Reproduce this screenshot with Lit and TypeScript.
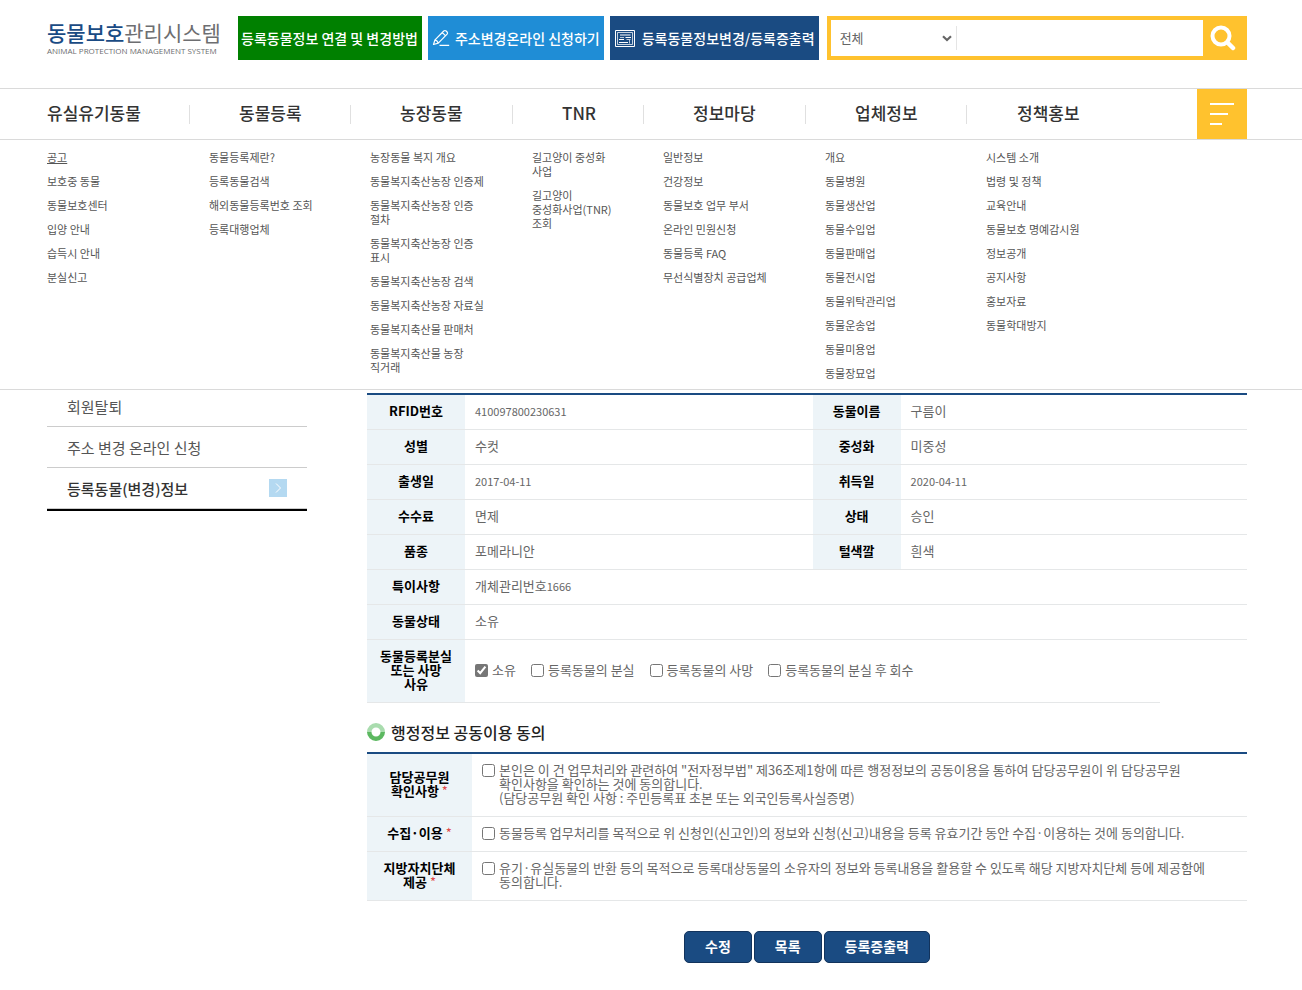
import { LitElement, html, css, nothing } from "lit";
import { customElement } from "lit/decorators.js";

interface MenuGroup {
  title: string;
  items: string[];
}

const MENU: MenuGroup[] = [
  { title: "유실유기동물", items: ["공고", "보호중 동물", "동물보호센터", "입양 안내", "습득시 안내", "분실신고"] },
  { title: "동물등록", items: ["동물등록제란?", "등록동물검색", "해외동물등록번호 조회", "등록대행업체"] },
  {
    title: "농장동물",
    items: [
      "농장동물 복지 개요",
      "동물복지축산농장 인증제",
      "동물복지축산농장 인증 절차",
      "동물복지축산농장 인증 표시",
      "동물복지축산농장 검색",
      "동물복지축산농장 자료실",
      "동물복지축산물 판매처",
      "동물복지축산물 농장 직거래",
    ],
  },
  { title: "TNR", items: ["길고양이 중성화 사업", "길고양이 중성화사업(TNR) 조회"] },
  {
    title: "정보마당",
    items: ["일반정보", "건강정보", "동물보호 업무 부서", "온라인 민원신청", "동물등록 FAQ", "무선식별장치 공급업체"],
  },
  {
    title: "업체정보",
    items: [
      "개요", "동물병원", "동물생산업", "동물수입업", "동물판매업",
      "동물전시업", "동물위탁관리업", "동물운송업", "동물미용업", "동물장묘업",
    ],
  },
  {
    title: "정책홍보",
    items: ["시스템 소개", "법령 및 정책", "교육안내", "동물보호 명예감시원", "정보공개", "공지사항", "홍보자료", "동물학대방지"],
  },
];

const PAIRS = [
  ["RFID번호", "410097800230631", "동물이름", "구름이"],
  ["성별", "수컷", "중성화", "미중성"],
  ["출생일", "2017-04-11", "취득일", "2020-04-11"],
  ["수수료", "면제", "상태", "승인"],
  ["품종", "포메라니안", "털색깔", "흰색"],
];

const REASONS = ["소유", "등록동물의 분실", "등록동물의 사망", "등록동물의 분실 후 회수"];

const value = (text: string) =>
  /^[\d-]+$/.test(text) ? html`<span class="num">${text}</span>` : text;

@customElement("site-header")
class SiteHeader extends LitElement {
  static styles = css`
    :host { display: block; }
    a { color: inherit; text-decoration: none; }
    .bar {
      display: flex;
      align-items: flex-start;
      padding: 16px 55px 28px 47px;
    }
    .logo { width: 191px; flex: none; color: #6d6e71; }
    .name { display: block; padding-top: 2px; font-size: 21px; line-height: 28px; white-space: nowrap; }
    .name b { color: #1a4b84; font-weight: 500; }
    .sub { display: block; font: 8px/10px "Open Sans", sans-serif; white-space: nowrap; }
    .quick { display: flex; gap: 6px; flex: none; }
    .quick a {
      display: flex;
      align-items: center;
      height: 44px;
      padding: 0 4px 0 3px;
      color: #fff;
      font-size: 14px;
      font-weight: 500;
      white-space: nowrap;
    }
    .green { background: #008000; }
    .quick .blue { background: #1f8dd6; gap: 5px; padding-left: 4px; }
    .quick .navy { background: #1a4b82; gap: 7px; padding-left: 5px; }
    .search {
      display: flex;
      flex: 1;
      min-width: 0;
      height: 36px;
      margin-left: 8px;
      border: 4px solid #ffc22e;
      border-right: 0;
      background: #fff;
    }
    .pick { display: grid; width: 126px; flex: none; align-items: center; }
    .pick > * { grid-area: 1 / 1; }
    .pick select {
      appearance: none;
      width: 100%;
      height: 24px;
      padding: 0 24px 0 9px;
      border: 0;
      border-right: 1px solid #e5e5e5;
      border-radius: 0;
      background: none;
      color: #666;
      font: inherit;
      font-size: 13px;
      line-height: 22px;
    }
    .pick svg { justify-self: end; margin-right: 5px; pointer-events: none; }
    .search input { flex: 1; min-width: 0; border: 0; padding: 0 8px; outline: none; font: inherit; font-size: 13px; }
    .search button {
      display: grid;
      place-items: center;
      width: 44px;
      flex: none;
      padding: 0 4px 0 0;
      border: 0;
      background: #ffc22e;
    }
  `;

  render() {
    return html`
      <header class="bar">
        <a class="logo" href="#">
          <span class="name"><b>동물보호</b>관리시스템</span>
          <span class="sub">ANIMAL PROTECTION MANAGEMENT SYSTEM</span>
        </a>
        <div class="quick">
          <a class="green" href="#">등록동물정보 연결 및 변경방법</a>
          <a class="blue" href="#">
            <svg width="18" height="18" viewBox="0 0 18 18" fill="none" stroke="#fff" stroke-width="1.2" stroke-linejoin="round">
              <path d="M1.500 15.500 3 10.800 11.800 2q1.200-1 2.300 0l1 1q1 1 0 2.200L6.300 14.100zM3 10.800q2.400.600 3.300 3.300M10.400 3.600l3.200 3.200M7.500 16.400h9.700" />
            </svg>
            주소변경온라인 신청하기
          </a>
          <a class="navy" href="#">
            <svg width="20" height="17" viewBox="0 0 20 17" fill="none" stroke="#fff">
              <path d="M.5.5h19v16H.5z" />
              <path d="M2.500 2.500h15v12h-15z" opacity=".75" />
              <path d="M5 5h10.500M4 9.500h5M10.500 7.500h5.500M4 12.500h9" />
              <path d="M5 7.500h4M11.500 9.500h4M14.500 10v3.500" opacity=".7" />
            </svg>
            등록동물정보변경/등록증출력
          </a>
        </div>
        <form class="search" @submit=${(e: Event) => e.preventDefault()}>
          <div class="pick">
            <select aria-label="검색 구분"><option>전체</option></select>
            <svg width="10" height="7" viewBox="0 0 10 7" fill="none" stroke="#666" stroke-width="2.2">
              <path d="m1 1.200 4 3.800 4-3.800" />
            </svg>
          </div>
          <input type="text" aria-label="검색어" />
          <button aria-label="검색">
            <svg width="26" height="26" viewBox="0 0 26 26" fill="none" stroke="#fff">
              <circle cx="11" cy="11" r="8.500" stroke-width="4" />
              <path d="m17.500 17.500 5.500 5.500" stroke-width="4.500" stroke-linecap="round" />
            </svg>
          </button>
        </form>
      </header>
    `;
  }
}

@customElement("site-menu")
class SiteMenu extends LitElement {
  static styles = css`
    :host { display: block; position: relative; z-index: 1; background: #fff; }
    a { color: inherit; text-decoration: none; }
    .row {
      display: grid;
      grid-template-columns: 143fr 161fr 162fr 131fr 162fr 161fr 280fr;
      padding: 0 55px 0 47px;
    }
    .titles { border-top: 1px solid #dadada; border-bottom: 1px solid #dadada; align-items: center; }
    .title {
      height: 19px;
      padding-left: 49px;
      border-right: 1px solid #e0e0e0;
      color: #333;
      font-size: 17px;
      font-weight: 500;
      line-height: 16px;
      white-space: nowrap;
    }
    .title:first-child { padding-left: 0; }
    .last { display: flex; align-items: center; justify-content: space-between; padding-left: 50px; }
    .last a { height: 19px; color: #333; font-size: 17px; font-weight: 500; line-height: 16px; }
    .all {
      display: grid;
      align-content: center;
      gap: 8px;
      width: 50px;
      height: 50px;
      padding: 0 13px;
      border: 0;
      background: #ffc22e;
    }
    .all i { height: 2px; background: #fff; }
    .all i:nth-child(2) { width: 18px; }
    .all i:nth-child(3) { width: 12px; }
    .panel { padding-top: 10px; padding-bottom: 9px; border-bottom: 1px solid #dadada; }
    ul {
      display: grid;
      align-content: start;
      gap: 10px;
      margin: 0;
      padding: 0 20px 0 19px;
      list-style: none;
      color: #555;
      font-size: 11px;
      line-height: 14px;
      word-break: keep-all;
    }
    ul:first-child { padding-left: 0; }
    ul:first-child li:first-child a { text-decoration: underline; }
  `;

  render() {
    const last = MENU.length - 1;
    return html`
      <nav>
        <div class="row titles">
          ${MENU.slice(0, last).map((g) => html`<a class="title" href="#">${g.title}</a>`)}
          <div class="last">
            <a href="#">${MENU[last].title}</a>
            <button class="all" aria-label="전체메뉴"><i></i><i></i><i></i></button>
          </div>
        </div>
        <div class="row panel">
          ${MENU.map((g) => html`<ul>${g.items.map((t) => html`<li><a href="#">${t}</a></li>`)}</ul>`)}
        </div>
      </nav>
    `;
  }
}

@customElement("side-menu")
class SideMenu extends LitElement {
  static styles = css`
    :host { display: block; }
    ul { margin: 0; padding: 0; list-style: none; border-bottom: 2px solid #000; }
    a {
      display: flex;
      align-items: center;
      justify-content: space-between;
      height: 40px;
      padding: 0 20px;
      border-bottom: 1px solid #ccc;
      color: #555;
      font-size: 15px;
      text-decoration: none;
    }
    a.on { color: #333; font-weight: 500; }
  `;

  render() {
    return html`
      <ul>
        <li><a href="#">회원탈퇴</a></li>
        <li><a href="#">주소 변경 온라인 신청</a></li>
        <li>
          <a class="on" href="#">
            등록동물(변경)정보
            <svg width="18" height="18" viewBox="0 0 18 18" fill="none">
              <path d="M0 0h18v18H0z" fill="#b4d9f1" />
              <path d="m7 4.500 4.500 4.500L7 13.500" stroke="#fff" />
            </svg>
          </a>
        </li>
      </ul>
    `;
  }
}

@customElement("animal-detail")
class AnimalDetail extends LitElement {
  static styles = css`
    :host { display: block; min-width: 0; }
    table {
      width: 100%;
      table-layout: fixed;
      border-collapse: separate;
      border-spacing: 0;
      border-top: 2px solid #1a4b82;
      font-size: 13px;
      line-height: 14px;
      word-break: keep-all;
    }
    th, td { padding: 9px 10px 11px; border-bottom: 1px solid #e5e7e8; }
    th { background: #edf4f8; color: #000; font-weight: 700; }
    td { color: #666; text-align: left; }
    .c1 { width: 98px; }
    .c2 { width: 39.5%; }
    .c3 { width: 88px; }
    .c5 { width: 87px; }
    .a1 { width: 105px; }
    .num { font-size: 11px; }
    .choices { display: flex; flex-wrap: wrap; gap: 15px; }
    label { display: flex; gap: 4px; }
    input { flex: none; width: 13px; height: 13px; margin: 1px 0 0; accent-color: #767676; }
    .red { color: #e04848; font-weight: 400; }
    h2 {
      display: flex;
      align-items: center;
      gap: 6px;
      margin: 0;
      padding: 19px 0 10px;
      color: #222;
      font-size: 16px;
      font-weight: 500;
      line-height: 20px;
    }
    .buttons { display: flex; justify-content: center; gap: 2px; padding: 30px 0 27px; }
    button {
      height: 32px;
      padding: 0 20px 2px;
      border: 1px solid #12335c;
      border-radius: 5px;
      background: #1a4b82;
      color: #fff;
      font: inherit;
      font-size: 14px;
      font-weight: 700;
      line-height: 20px;
    }
  `;

  private consent(id: string, title: unknown, text: unknown) {
    return html`
      <tr>
        <th scope="row">${title} <span class="red">*</span></th>
        <td><label for=${id}><input type="checkbox" id=${id} /><span>${text}</span></label></td>
      </tr>
    `;
  }

  render() {
    return html`
      <table>
        <colgroup><col class="c1" /><col class="c2" /><col class="c3" /><col /><col class="c5" /></colgroup>
        <tbody>
          ${PAIRS.map(
            ([a, b, c, d]) => html`
              <tr>
                <th scope="row">${a}</th><td>${value(b)}</td>
                <th scope="row">${c}</th><td colspan="2">${value(d)}</td>
              </tr>
            `,
          )}
          <tr><th scope="row">특이사항</th><td colspan="4">개체관리번호<span class="num">1666</span></td></tr>
          <tr><th scope="row">동물상태</th><td colspan="4">소유</td></tr>
          <tr>
            <th scope="row">동물등록분실<br />또는 사망<br />사유</th>
            <td colspan="3">
              <div class="choices">
                ${REASONS.map(
                  (r, i) => html`
                    <label for="reason${i}">
                      <input type="checkbox" id="reason${i}" checked=${i === 0 ? "" : nothing} />
                      <span>${r}</span>
                    </label>
                  `,
                )}
              </div>
            </td>
          </tr>
        </tbody>
      </table>

      <h2>
        <svg width="18" height="18" viewBox="0 0 18 18" fill="none" stroke-width="4.500">
          <path d="M2.250 9a6.750 6.750 0 0 1 13.500 0" stroke="#a9dcae" />
          <path d="M2.250 9a6.750 6.750 0 0 0 13.500 0" stroke="#5cb860" />
        </svg>
        행정정보 공동이용 동의
      </h2>

      <table class="agree">
        <colgroup><col class="a1" /><col /></colgroup>
        <tbody>
          ${this.consent(
            "agree-official",
            html`담당공무원<br />확인사항`,
            html`본인은 이 건 업무처리와 관련하여 "전자정부법" 제36조제1항에 따른 행정정보의 공동이용을 통하여 담당공무원이 위 담당공무원<br />확인사항을 확인하는 것에 동의합니다.<br />(담당공무원 확인 사항 : 주민등록표 초본 또는 외국인등록사실증명)`,
          )}
          ${this.consent(
            "agree-collect",
            "수집·이용",
            "동물등록 업무처리를 목적으로 위 신청인(신고인)의 정보와 신청(신고)내용을 등록 유효기간 동안 수집·이용하는 것에 동의합니다.",
          )}
          ${this.consent(
            "agree-local",
            html`지방자치단체<br />제공`,
            html`유기·유실동물의 반환 등의 목적으로 등록대상동물의 소유자의 정보와 등록내용을 활용할 수 있도록 해당 지방자치단체 등에 제공함에<br />동의합니다.`,
          )}
        </tbody>
      </table>

      <div class="buttons">
        <button type="button">수정</button>
        <button type="button">목록</button>
        <button type="button">등록증출력</button>
      </div>
    `;
  }
}

@customElement("app-root")
class AppRoot extends LitElement {
  static styles = css`
    :host {
      display: block;
      min-height: 100vh;
      background: #fff;
      font-family: "Noto Sans CJK KR", "Noto Sans", sans-serif;
    }
    main {
      display: grid;
      grid-template-columns: 260px 1fr;
      gap: 60px;
      align-items: start;
      margin-top: -4px;
      padding: 0 55px 0 47px;
    }
    animal-detail { padding-top: 7px; }
  `;

  render() {
    return html`
      <site-header></site-header>
      <site-menu></site-menu>
      <main>
        <side-menu></side-menu>
        <animal-detail></animal-detail>
      </main>
    `;
  }
}
